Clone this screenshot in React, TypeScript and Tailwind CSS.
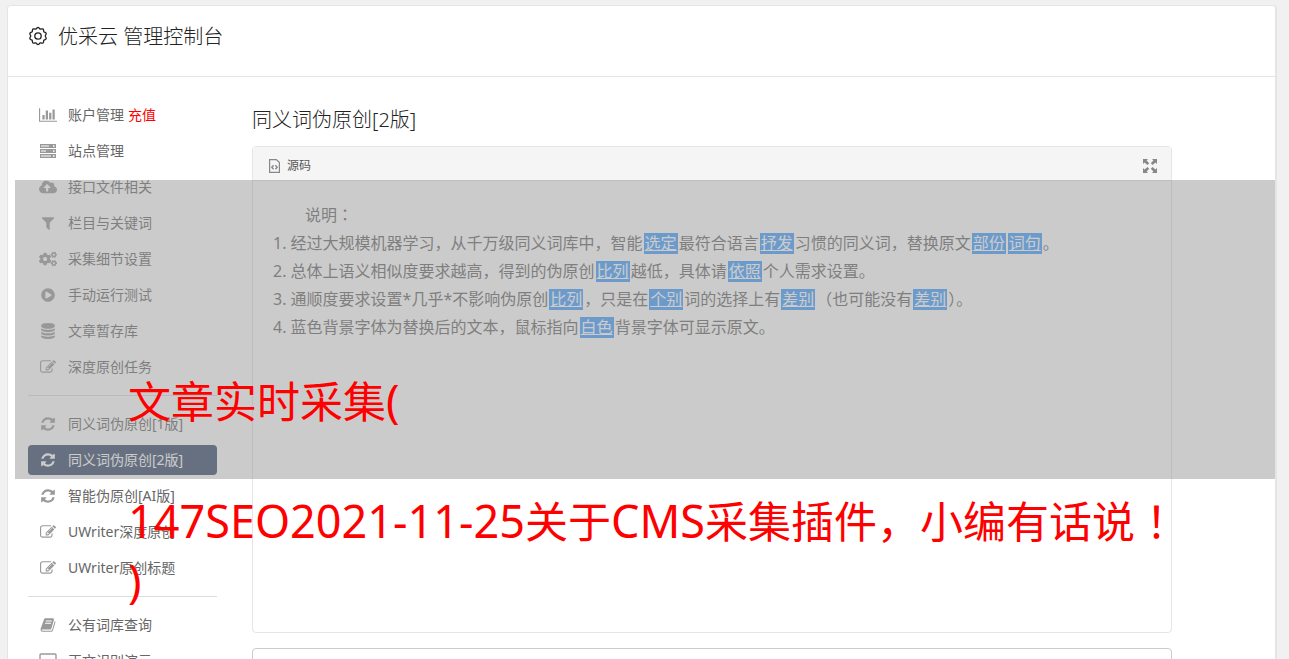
import type { ReactNode } from "react";
import { FaCloudUploadAlt, FaCogs, FaPlayCircle } from "react-icons/fa";

type IconProps = { className?: string };

function Glyph({ d, wide, className }: { d: string; wide?: boolean; className?: string }) {
  return (
    <svg viewBox={wide ? "0 0 2048 1792" : "0 0 1792 1792"} className={className} fill="currentColor" aria-hidden="true">
      <path d={d} />
    </svg>
  );
}

const ChartIcon = () => (
  <Glyph wide className="h-4 w-[18px]" d="M640 896v512h-256v-512h256zm384-512v1024h-256v-1024h256zm1024 1152v128h-2048v-1536h128v1408h1920zm-640-896v768h-256v-768h256zm384-384v1152h-256v-1152h256z" />
);

const FilterIcon = () => (
  <Glyph className="size-4" d="M1595 295q17 41-14 70l-493 493v742q0 42-39 59-13 5-25 5-27 0-45-19l-256-256q-19-19-19-45v-486l-493-493q-31-29-14-70 17-39 59-39h1280q42 0 59 39z" />
);

const DatabaseIcon = () => (
  <Glyph className="size-4" d="M896 768q237 0 443-43t325-127v170q0 69-103 128t-280 93.5-385 34.5-385-34.5-280-93.5-103-128v-170q119 84 325 127t443 43zm0 768q237 0 443-43t325-127v170q0 69-103 128t-280 93.5-385 34.5-385-34.5-280-93.5-103-128v-170q119 84 325 127t443 43zm0-384q237 0 443-43t325-127v170q0 69-103 128t-280 93.5-385 34.5-385-34.5-280-93.5-103-128v-170q119 84 325 127t443 43zm0-1152q208 0 385 34.5t280 93.5 103 128v128q0 69-103 128t-280 93.5-385 34.5-385-34.5-280-93.5-103-128v-128q0-69 103-128t280-93.5 385-34.5z" />
);

const EditIcon = () => (
  <Glyph className="size-4" d="M888 1184l116-116-152-152-116 116v56h96v96h56zm440-720q-16-16-33 1l-350 350q-17 17-1 33t33-1l350-350q17-17 1-33zm80 594v190q0 119-84.5 203.5t-203.5 84.5h-832q-119 0-203.5-84.5t-84.5-203.5v-832q0-119 84.5-203.5t203.5-84.5h832q63 0 117 25 15 7 18 23 3 17-9 29l-49 49q-14 14-32 8-23-6-45-6h-832q-66 0-113 47t-47 113v832q0 66 47 113t113 47h832q66 0 113-47t47-113v-126q0-13 9-22l64-64q15-15 35-7t20 29zm-96-738l288 288-672 672h-288v-288zm444 132l-92 92-288-288 92-92q28-28 68-28t68 28l152 152q28 28 28 68t-28 68z" />
);

const RefreshIcon = () => (
  <Glyph className="size-4" d="M1639 1056q0 5-1 7-64 268-268 434.5t-478 166.5q-146 0-282.5-55t-243.5-157l-129 129q-19 19-45 19t-45-19-19-45v-448q0-26 19-45t45-19h448q26 0 45 19t19 45-19 45l-137 137q71 66 161 102t187 36q134 0 250-65t186-179q11-17 53-117 8-23 30-23h192q13 0 22.5 9.5t9.5 22.5zm25-800v448q0 26-19 45t-45 19h-448q-26 0-45-19t-19-45 19-45l138-138q-148-137-349-137-134 0-250 65t-186 179q-11 17-53 117-8 23-30 23h-199q-13 0-22.5-9.5t-9.5-22.5v-7q65-268 270-434.5t480-166.5q146 0 284 55.5t245 156.5l130-129q19-19 45-19t45 19 19 45z" />
);

const BookIcon = () => (
  <Glyph className="size-4" d="M1703 478q40 57 18 129l-275 906q-19 64-76.5 107.5t-122.5 43.5h-923q-77 0-148.5-53.5t-99.5-131.5q-24-67-2-127 0-4 3-27t4-37q1-8-3-21.5t-3-19.5q2-11 8-21t16.5-23.5 16.5-23.5q23-38 45-91.5t30-91.5q3-10 .5-30t-.5-28q3-11 17-28t17-23q21-36 42-92t25-90q1-9-2.5-32t.5-28q4-13 22-30.5t22-22.5q19-26 42.5-84.5t27.5-96.5q1-8-3-25.5t-2-26.5q2-8 9-18t18-23 17-21q8-12 16.5-30.5t15-35 16-36 19.5-32 26.5-23.5 36-11.5 47.5 5.5l-1 3q38-9 51-9h761q74 0 114 56t18 130l-274 906q-36 119-71.5 153.5t-128.5 34.5h-869q-27 0-38 15-11 16-1 43 24 70 144 70h923q29 0 56-15.5t35-41.5l300-987q7-22 5-57 38 15 59 43zm-1064 2q-4 13 2 22.5t20 9.5h608q13 0 25.5-9.5t16.5-22.5l21-64q4-13-2-22.5t-20-9.5h-608q-13 0-25.5 9.5t-16.5 22.5zm-83 256q-4 13 2 22.5t20 9.5h608q13 0 25.5-9.5t16.5-22.5l21-64q4-13-2-22.5t-20-9.5h-608q-13 0-25.5 9.5t-16.5 22.5z" />
);

const ServerIcon = () => (
  <svg viewBox="0 0 16 16" className="size-4" fill="currentColor" aria-hidden="true">
    <path fillRule="evenodd" d="M0 1h16v4H0zM1 2.4v1.2h8V2.4zM13 2.3v1.4h1.5V2.3zM0 6h16v4H0zM1 7.4v1.2h5V7.4zM13 7.3v1.4h1.5V7.3zM0 11h16v4H0zM1 12.4v1.2h10v-1.2zM13 12.3v1.4h1.5v-1.4z" />
  </svg>
);

const LaptopIcon = () => (
  <svg viewBox="0 0 18 16" className="h-4 w-[18px]" fill="none" stroke="currentColor" aria-hidden="true">
    <rect x="1" y="1" width="16" height="11" rx="1" strokeWidth="1.4" />
    <path d="M0 14.5h18" strokeWidth="1.6" />
  </svg>
);

// ten rounded bumps around a ring
function GearIcon({ className }: IconProps) {
  const outline = Array.from({ length: 120 }, (_, i) => {
    const a = (i / 120) * Math.PI * 2 - Math.PI / 2;
    const r = 7.9 + 0.65 * Math.cos((a + Math.PI / 2) * 10);
    return `${(10 + r * Math.cos(a)).toFixed(2)} ${(10 + r * Math.sin(a)).toFixed(2)}`;
  });
  return (
    <svg viewBox="0 0 20 20" className={className} fill="none" stroke="currentColor" strokeWidth="1.3" aria-hidden="true">
      <path d={`M${outline.join("L")}Z`} />
      <circle cx="10" cy="10" r="3.2" />
    </svg>
  );
}

type NavItem = { label: string; icon: ReactNode; extra?: string; active?: boolean };

const groups: NavItem[][] = [
  [
    { label: "账户管理", icon: <ChartIcon />, extra: "充值" },
    { label: "站点管理", icon: <ServerIcon /> },
    { label: "接口文件相关", icon: <FaCloudUploadAlt className="size-[18px]" /> },
    { label: "栏目与关键词", icon: <FilterIcon /> },
    { label: "采集细节设置", icon: <FaCogs className="size-[18px]" /> },
    { label: "手动运行测试", icon: <FaPlayCircle className="size-[14px]" /> },
    { label: "文章暂存库", icon: <DatabaseIcon /> },
    { label: "深度原创任务", icon: <EditIcon /> },
  ],
  [
    { label: "同义词伪原创[1版]", icon: <RefreshIcon /> },
    { label: "同义词伪原创[2版]", icon: <RefreshIcon />, active: true },
    { label: "智能伪原创[AI版]", icon: <RefreshIcon /> },
    { label: "UWriter深度原创", icon: <EditIcon /> },
    { label: "UWriter原创标题", icon: <EditIcon /> },
  ],
  [
    { label: "公有词库查询", icon: <BookIcon /> },
    { label: "正文识别演示", icon: <LaptopIcon /> },
  ],
];

function Sidebar() {
  return (
    <nav className="w-[189px] shrink-0">
      {groups.map((items, g) => (
        <ul key={g} className={g > 0 ? "mt-[13px] space-y-1.5 border-t border-[#ddd] pt-[13px]" : "space-y-1.5"}>
          {items.map((item) => (
            <li key={item.label}>
              <a
                href="#"
                className={`flex h-[30px] items-center rounded-sm pl-[10px] text-sm whitespace-nowrap ${item.active ? "bg-[#344868] text-white" : "text-[#666]"}`}
              >
                <span className={`mr-[10px] flex w-5 justify-center ${item.active ? "text-white" : "text-[#999]"}`}>{item.icon}</span>
                {item.label}
                {item.extra && <span className="ml-1 text-[#f00]">{item.extra}</span>}
              </a>
            </li>
          ))}
        </ul>
      ))}
    </nav>
  );
}

function Mark({ children }: { children: ReactNode }) {
  return <span className="mx-px inline-block bg-[#409eff] px-px leading-[21px] text-white underline">{children}</span>;
}

// punctuation centred in its full-width cell
function Punct({ children }: { children: ReactNode }) {
  return <span className="font-['Noto_Sans_CJK_TC',sans-serif] leading-none" lang="zh-TW">{children}</span>;
}

// Latin runs of the banner are set a little larger than the Chinese
function Latin({ children }: { children: ReactNode }) {
  return <span className="text-[45px] leading-none">{children}</span>;
}

function Editor() {
  return (
    <section className="flex h-[487px] flex-col rounded border border-[#e5e5e5]">
      <div className="flex h-[34px] shrink-0 items-center justify-between border-b border-[#e5e5e5] bg-[#f5f5f5] px-[14px] pt-1">
        <button type="button" className="flex items-center gap-[6px] text-xs text-[#555]">
          <svg viewBox="0 0 14 16" className="h-4 w-[14px]" fill="none" stroke="#888" strokeWidth="1.2" aria-hidden="true">
            <path d="M2.6 1.6h6.8l3 3v9.8H2.6z" />
            <path d="M6.6 7.2 4.8 9.2l1.8 2M8.4 7.2l1.8 2-1.8 2" strokeWidth="1.4" />
          </svg>
          源码
        </button>
        <button type="button" aria-label="全屏" className="text-[#888]">
          <svg viewBox="0 0 14 14" className="size-[14px]" fill="currentColor" aria-hidden="true">
            <path d="M0 0h5L3.6 1.6 6.2 4.2 4.4 6 1.6 3.4 0 5zM14 0v5l-1.6-1.6L9.6 6 7.8 4.2l2.6-2.6L9 0zM0 14V9l1.6 1.6L4.4 8l1.8 1.8-2.6 2.6L5 14zM14 14H9l1.4-1.6-2.6-2.6L9.6 8l2.8 2.6L14 9z" />
          </svg>
        </button>
      </div>
      <div className="p-5 text-base leading-7 text-[#666]">
        <p className="pl-8">说明<Punct>：</Punct></p>
        <ol>
          <li>1. 经过大规模机器学习，从千万级同义词库中，智能<Mark>选定</Mark>最符合语言<Mark>抒发</Mark>习惯的同义词，替换原文<Mark>部份</Mark><Mark>词句</Mark>。</li>
          <li>2. 总体上语义相似度要求越高，得到的伪原创<Mark>比列</Mark>越低，具体请<Mark>依照</Mark>个人需求设置。</li>
          <li>3. 通顺度要求设置*几乎*不影响伪原创<Mark>比列</Mark>，只是在<Mark>个别</Mark>词的选择上有<Mark>差别</Mark>（也可能没有<Mark>差别</Mark><Punct>）</Punct>。</li>
          <li>4. 蓝色背景字体为替换后的文本，鼠标指向<Mark>白色</Mark>背景字体可显示原文。</li>
        </ol>
      </div>
    </section>
  );
}

export default function App() {
  return (
    <div className="relative h-screen overflow-hidden bg-[#f1f1f1] pt-[5px] pr-3 pl-[7px] font-['Noto_Sans','Noto_Sans_CJK_SC',sans-serif]">
      <div className="min-h-full rounded-t border border-r-2 border-[#e5e5e5] bg-white">
        <header className="flex h-[71px] items-center gap-[10px] border-b border-[#e5e5e5] px-5 pb-[10px] text-[#222]">
          <GearIcon className="size-5" />
          <h1 className="pt-[2px] text-xl font-light">优采云 管理控制台</h1>
        </header>
        <div className="flex gap-[35px] pt-[23px] pr-[103px] pl-5">
          <Sidebar />
          <main className="min-w-0 flex-1">
            <h2 className="mt-[5px] mb-[11px] text-xl leading-[30px] font-light text-[#222]">同义词伪原创[2版]</h2>
            <Editor />
            <textarea aria-label="内容" className="mt-[15px] block h-40 w-full resize-none rounded border border-[#ccc]" />
          </main>
        </div>
      </div>

      {/* banner laid over the console */}
      <div className="pointer-events-none absolute top-[180px] right-[14px] left-[15px] h-[299px] bg-[#989898]/50" />
      <p className="pointer-events-none absolute top-[372px] left-32 text-[43px] leading-[60px] whitespace-nowrap text-[#f00]">
        文章实时采集<Latin>(</Latin>
        <br />
        <br />
        <Latin>147SEO2021-11-25</Latin>关于<Latin>CMS</Latin>采集插件，小编有话说<Punct>！</Punct>
        <br />
        <Latin>)</Latin>
      </p>
    </div>
  );
}
